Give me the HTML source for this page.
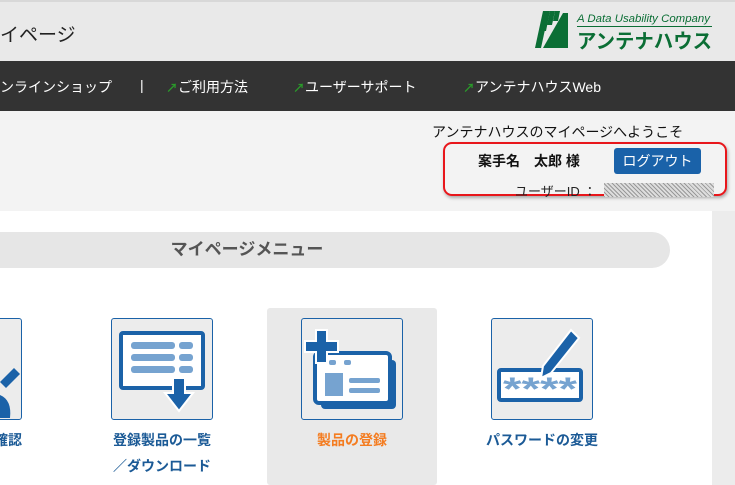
<!DOCTYPE html>
<html><head><meta charset="utf-8"><style>
body{margin:0;width:735px;height:485px;overflow:hidden;background:#f3f3f3;font-family:"Liberation Sans","Noto Sans CJK JP",sans-serif;position:relative}
.a{position:absolute}
.hd{left:0;top:0;width:735px;height:61px;background:#e9e9e9;border-top:2px solid #d8d8d8;box-sizing:border-box}
.nav{left:0;top:61px;width:735px;height:50px;background:#333;color:#fff;font-size:14px}
.nav span{position:absolute;top:16px;white-space:nowrap}
.ar{color:#2a9a2a;font-weight:bold;font-size:12px}
.box{width:100px;height:100px;border:1px solid #1b62a8;border-radius:3px;background:#ececec;top:318px}
.lb{color:#1b5a96;font-weight:bold;font-size:14px;text-align:center;line-height:26px;top:427px;width:180px}
</style></head><body>
<div class="a hd"></div>
<div class="a" style="left:0;top:20px;font-size:19px;color:#222">イページ</div>
<svg class="a" style="left:535px;top:11px" width="180" height="40">
<g fill="#0b6e35"><polygon points="0,37 8,0 14,0 6,37"/><polygon points="6,20 10,0 15,0 11,20"/><polygon points="12,14 15,0 20,0 17,14"/><polygon points="18,10 20,0 25,0 23,10"/><polygon points="8,37 28,2 30,37"/><polygon points="28,2 33,2 33,37 28,37"/></g>
<text x="42" y="11" font-size="11" font-style="italic" fill="#0b6e35" font-family="Liberation Sans" textLength="133" lengthAdjust="spacingAndGlyphs">A Data Usability Company</text>
<rect x="42" y="15" width="135" height="1" fill="#0b6e35"/>
<text x="42" y="37" font-size="20" font-weight="bold" fill="#0b6e35" font-family="Noto Sans CJK JP" textLength="135" lengthAdjust="spacingAndGlyphs">アンテナハウス</text>
</svg>
<div class="a nav">
<span style="left:0">ンラインショップ</span>
<span style="left:140px">|</span>
<span style="left:166px"><b class="ar">↗</b>ご利用方法</span>
<span style="left:293px"><b class="ar">↗</b>ユーザーサポート</span>
<span style="left:463px"><b class="ar">↗</b>アンテナハウスWeb</span>
</div>
<div class="a" style="left:432px;top:122px;font-size:14px;color:#111">アンテナハウスのマイページへようこそ</div>
<div class="a" style="left:443px;top:142px;width:280px;height:50px;border:2px solid #e8161b;border-radius:9px;box-shadow:1px 2px 3px rgba(0,0,0,.3)"></div>
<div class="a" style="left:478px;top:151px;font-size:14px;font-weight:bold;color:#111">案手名　太郎 様</div>
<div class="a" style="left:614px;top:148px;width:87px;height:26px;background:#1a62a9;border-radius:3px;color:#fff;font-size:14px;text-align:center;line-height:26px">ログアウト</div>
<div class="a" style="left:515px;top:181px;font-size:13px;color:#222">ユーザーID ：</div>
<div class="a" style="left:604px;top:183px;width:110px;height:14px;background:repeating-linear-gradient(45deg,#999 0 1px,#ddd 1px 3px)"></div>
<div class="a" style="left:0;top:211px;width:712px;height:274px;background:#fff"></div>
<div class="a" style="left:0;top:232px;width:670px;height:36px;background:#e6e6e6;border-radius:0 18px 18px 0;text-align:center;line-height:36px;font-size:17px;font-weight:bold;color:#555;width:670px"><span style="position:relative;left:-88px">マイページメニュー</span></div>
<div class="a" style="left:267px;top:308px;width:170px;height:177px;background:#e9e9e9;border-radius:3px"></div>
<div class="a box" style="left:-80px"></div>
<svg class="a" style="left:0;top:360px" width="22" height="60"><path d="M0,22 L14,8 L20,14 L6,28Z" fill="#1b62a8"/><path d="M0,35 Q12,40 10,58 L0,58Z" fill="#1b62a8"/></svg>
<div class="a box" style="left:111px"></div>
<svg class="a" style="left:111px;top:318px" width="102" height="102">
<rect x="10" y="15" width="82" height="55" fill="#fff" stroke="#1b62a8" stroke-width="4" rx="2"/>
<g fill="#76a3d0"><rect x="20" y="24" width="44" height="7" rx="3"/><rect x="68" y="24" width="14" height="7" rx="3"/><rect x="20" y="36" width="44" height="7" rx="3"/><rect x="68" y="36" width="14" height="7" rx="3"/><rect x="20" y="48" width="44" height="7" rx="3"/><rect x="68" y="48" width="14" height="7" rx="3"/></g>
<path d="M62,60 H74 V75 H82 L68,93 L54,75 H62Z" fill="#1b62a8" stroke="#fff" stroke-width="2"/></svg>
<div class="a box" style="left:301px"></div>
<svg class="a" style="left:301px;top:318px" width="102" height="102">
<rect x="20" y="42" width="75" height="49" rx="4" fill="#1b62a8"/>
<rect x="14" y="35" width="75" height="50" rx="4" fill="#fff" stroke="#1b62a8" stroke-width="4"/>
<g fill="#76a3d0"><rect x="24" y="55" width="18" height="23"/><rect x="48" y="60" width="31" height="5" rx="2"/><rect x="48" y="70" width="31" height="5" rx="2"/><rect x="28" y="42" width="7" height="5" rx="2"/><rect x="43" y="42" width="7" height="5" rx="2"/></g>
<path d="M15,12 H26 V23 H37 V34 H26 V45 H15 V34 H4 V23 H15Z" fill="#1b62a8" stroke="#fff" stroke-width="2"/></svg>
<div class="a box" style="left:491px"></div>
<svg class="a" style="left:491px;top:318px" width="102" height="102">
<rect x="8" y="52" width="82" height="30" rx="2" fill="#fff" stroke="#1b62a8" stroke-width="4"/>
<text x="12" y="82" font-size="32" font-weight="bold" fill="#76a3d0" font-family="Liberation Sans" textLength="74" lengthAdjust="spacingAndGlyphs">****</text>
<path d="M80,12 L88,20 L60,55 L50,60 L52,48Z" fill="#1b62a8" stroke="#fff" stroke-width="2"/></svg>
<div class="a lb" style="left:-78px;text-align:right;width:100px">確認</div>
<div class="a lb" style="left:72px">登録製品の一覧<br>／ダウンロード</div>
<div class="a lb" style="left:262px;color:#f47c20">製品の登録</div>
<div class="a lb" style="left:452px">パスワードの変更</div>
<div class="a" style="left:712px;top:211px;width:23px;height:274px;background:#ececec"></div>
</body></html>
